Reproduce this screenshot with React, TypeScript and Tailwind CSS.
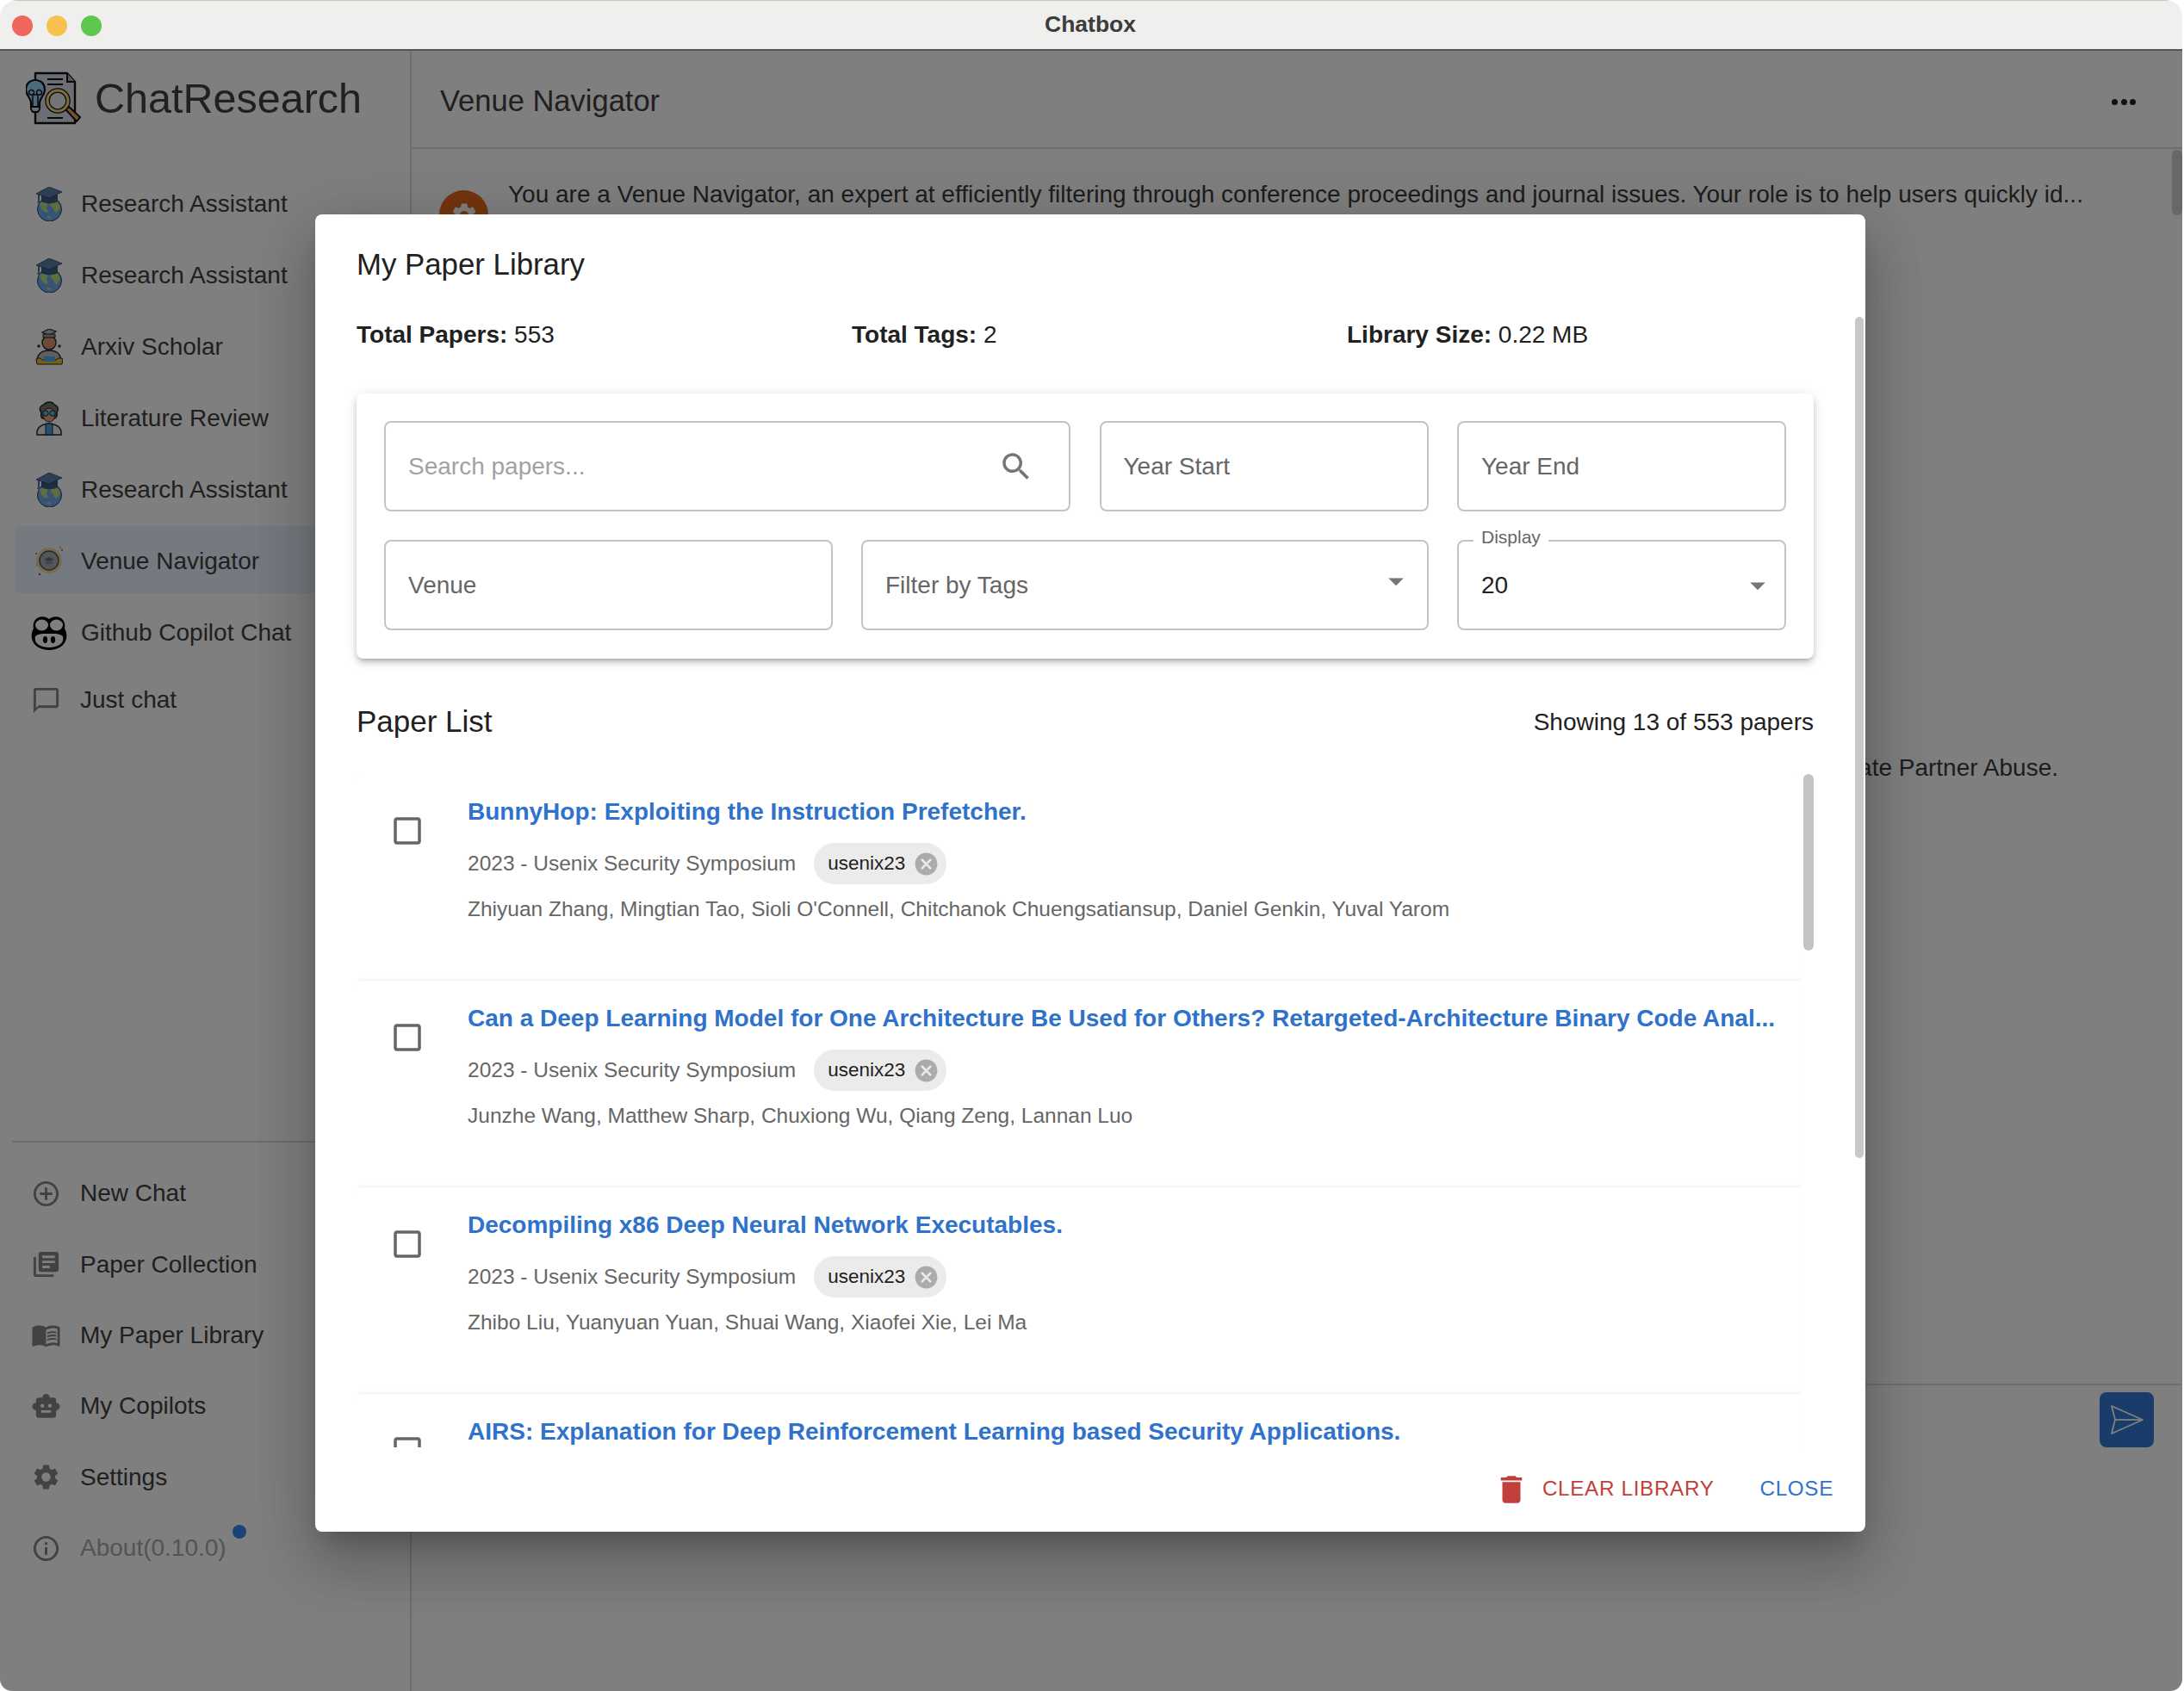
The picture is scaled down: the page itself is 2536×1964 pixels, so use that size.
import React from "react";

const P = {
  search: "M15.5 14h-.79l-.28-.27C15.41 12.59 16 11.11 16 9.5 16 5.91 13.09 3 9.5 3S3 5.91 3 9.5 5.91 16 9.5 16c1.61 0 3.09-.59 4.23-1.57l.27.28v.79l5 4.99L20.49 19l-4.99-5zm-6 0C7.01 14 5 11.99 5 9.5S7.01 5 9.5 5 14 7.01 14 9.5 11.99 14 9.5 14z",
  arrow: "M7 10l5 5 5-5z",
  box: "M19 5v14H5V5h14m0-2H5c-1.1 0-2 .9-2 2v14c0 1.1.9 2 2 2h14c1.1 0 2-.9 2-2V5c0-1.1-.9-2-2-2z",
  cancel: "M12 2C6.47 2 2 6.47 2 12s4.47 10 10 10 10-4.47 10-10S17.53 2 12 2zm5 13.59L15.59 17 12 13.41 8.41 17 7 15.59 10.59 12 7 8.41 8.41 7 12 10.59 15.59 7 17 8.41 13.41 12 17 15.59z",
  del: "M6 19c0 1.1.9 2 2 2h8c1.1 0 2-.9 2-2V7H6v12zM19 4h-3.5l-1-1h-5l-1 1H5v2h14V4z",
  chat: "M20 2H4c-1.1 0-2 .9-2 2v18l4-4h14c1.1 0 2-.9 2-2V4c0-1.1-.9-2-2-2zm0 14H6l-2 2V4h16v12z",
  add: "M13 7h-2v4H7v2h4v4h2v-4h4v-2h-4V7zm-1-5C6.48 2 2 6.48 2 12s4.48 10 10 10 10-4.48 10-10S17.52 2 12 2zm0 18c-4.41 0-8-3.59-8-8s3.59-8 8-8 8 3.59 8 8-3.59 8-8 8z",
  lib: "M4 6H2v14c0 1.1.9 2 2 2h14v-2H4V6zm16-4H8c-1.1 0-2 .9-2 2v12c0 1.1.9 2 2 2h12c1.1 0 2-.9 2-2V4c0-1.1-.9-2-2-2zm-1 9H9V9h10v2zm-4 4H9v-2h6v2zm4-8H9V5h10v2z",
  book: "M21 5c-1.11-.35-2.33-.5-3.5-.5-1.95 0-4.05.4-5.5 1.5-1.45-1.1-3.55-1.5-5.5-1.5S2.45 4.9 1 6v14.65c0 .25.25.5.5.5.1 0 .15-.05.25-.05C3.1 20.45 5.05 20 6.5 20c1.95 0 4.05.4 5.5 1.5 1.35-.85 3.8-1.5 5.5-1.5 1.65 0 3.35.3 4.75 1.05.1.05.15.05.25.05.25 0 .5-.25.5-.5V6c-.6-.45-1.25-.75-2-1zm0 13.5c-1.1-.35-2.3-.5-3.5-.5-1.7 0-4.15.65-5.5 1.5V8c1.35-.85 3.8-1.5 5.5-1.5 1.2 0 2.4.15 3.5.5v11.5zM17.5 10.5c.88 0 1.73.09 2.5.26V9.24c-.79-.15-1.64-.24-2.5-.24-1.7 0-3.24.29-4.5.83v1.66c1.13-.64 2.7-.99 4.5-.99zM13 12.49v1.66c1.13-.64 2.7-.99 4.5-.99.88 0 1.73.09 2.5.26V11.9c-.79-.15-1.64-.24-2.5-.24-1.7 0-3.24.3-4.5.83zM17.5 14.33c-1.7 0-3.24.29-4.5.83v1.66c1.13-.64 2.7-.99 4.5-.99.88 0 1.73.09 2.5.26v-1.52c-.79-.16-1.64-.24-2.5-.24z",
  bot: "M20 9V7c0-1.1-.9-2-2-2h-3c0-1.66-1.34-3-3-3S9 3.34 9 5H6c-1.1 0-2 .9-2 2v2c-1.66 0-3 1.34-3 3s1.34 3 3 3v4c0 1.1.9 2 2 2h12c1.1 0 2-.9 2-2v-4c1.66 0 3-1.34 3-3s-1.34-3-3-3zM7.5 11.5c0-.83.67-1.5 1.5-1.5s1.5.67 1.5 1.5S9.83 13 9 13s-1.5-.67-1.5-1.5zM16 17H8v-2h8v2zm-1-4c-.83 0-1.5-.67-1.5-1.5S14.17 10 15 10s1.5.67 1.5 1.5S15.83 13 15 13z",
  gear: "M19.14 12.94c.04-.3.06-.61.06-.94 0-.32-.02-.64-.07-.94l2.03-1.58c.18-.14.23-.41.12-.61l-1.92-3.32c-.12-.22-.37-.29-.59-.22l-2.39.96c-.5-.38-1.03-.7-1.62-.94l-.36-2.54c-.04-.24-.24-.41-.48-.41h-3.84c-.24 0-.43.17-.47.41l-.36 2.54c-.59.24-1.13.57-1.62.94l-2.39-.96c-.22-.08-.47 0-.59.22L2.74 8.87c-.12.21-.08.47.12.61l2.03 1.58c-.05.3-.09.63-.09.94s.02.64.07.94l-2.03 1.58c-.18.14-.23.41-.12.61l1.92 3.32c.12.22.37.29.59.22l2.39-.96c.5.38 1.03.7 1.62.94l.36 2.54c.05.24.24.41.48.41h3.84c.24 0 .44-.17.47-.41l.36-2.54c.59-.24 1.13-.56 1.62-.94l2.39.96c.22.08.47 0 .59-.22l1.92-3.32c.12-.22.07-.47-.12-.61l-2.01-1.58zM12 15.6c-1.98 0-3.6-1.62-3.6-3.6s1.62-3.6 3.6-3.6 3.6 1.62 3.6 3.6-1.62 3.6-3.6 3.6z",
  info: "M11 7h2v2h-2zm0 4h2v6h-2zm1-9C6.48 2 2 6.48 2 12s4.48 10 10 10 10-4.48 10-10S17.52 2 12 2zm0 18c-4.41 0-8-3.59-8-8s3.59-8 8-8 8 3.59 8 8-3.59 8-8 8z",
};

function Mi({ d, className }: { d: string; className: string }) {
  return (
    <svg viewBox="0 0 24 24" fill="currentColor" className={className}>
      <path d={d} />
    </svg>
  );
}

function Logo() {
  return (
    <svg viewBox="30 82 65 64" className="w-[65px] h-[64px] shrink-0">
      <path d="M41 85h37l9 10v48H41z" fill="#d6dee6" stroke="#111" strokeWidth="2.4" strokeLinejoin="round" />
      <path d="M78 85v10h9" fill="#aab4bc" stroke="#111" strokeWidth="2" />
      <path d="M55 92h18M55 98h18M55 137h18" stroke="#111" strokeWidth="2" />
      <path d="M41 93c-7 0-11 5-11 11 0 6 5 9 6 15v5h10v-5c1-6 6-9 6-15 0-6-4-11-11-11z" fill="#94d6ff" stroke="#111" strokeWidth="2.2" />
      <path d="M38 123v-13a3 3 0 1 0-3 0h12a3 3 0 1 0-3 0v13" fill="none" stroke="#111" strokeWidth="1.5" />
      <path d="M36 124h10v3l-2 3h-6l-2-3z" fill="#d6dee6" stroke="#111" strokeWidth="1.8" />
      <path d="M76 127l4-3 13 12-4 5z" fill="#e8a860" stroke="#111" strokeWidth="2" />
      <circle cx="67" cy="117" r="12" fill="#e6e8ea" stroke="#111" strokeWidth="5.5" />
      <circle cx="67" cy="117" r="12" fill="none" stroke="#f4d87c" strokeWidth="3" />
    </svg>
  );
}

function Globe() {
  return (
    <svg viewBox="41 217 32 40" className="w-[32px] h-[40px]">
      <circle cx="57.5" cy="243" r="14" fill="#6ea6f0" stroke="#2a3f66" strokeWidth="1" />
      <path d="M46 236c4-2 7-1 9 1 1 2-2 3-1 5 2 2 2 4 0 5-3-1-7-4-8-11zM62 233c3 0 7 3 8 8-1 3-3 3-4 6-3 0-3-3-4-5-2-1-4-3-3-5 1-2 2-3 3-4zM54 252c2-1 4-1 6 0-2 2-4 2-6 0z" fill="#b8e07a" />
      <path d="M45 225v9" stroke="#4a6a9a" strokeWidth="2" />
      <path d="M43 236l2-6 2 6z" fill="#5a84b8" />
      <path d="M48 226v8c6 3 13 3 19 0v-8z" fill="#3e5a80" />
      <path d="M42 225l15-8 15 6-15 7z" fill="#5b7ea8" stroke="#2f4460" strokeWidth=".8" />
    </svg>
  );
}

function Scholar() {
  return (
    <svg viewBox="41 382 32 42" className="w-[32px] h-[42px]">
      <path d="M43 420c0-9 6-13 14-13s14 4 14 13z" fill="#b8bcc0" stroke="#222" strokeWidth="1.4" />
      <path d="M42 417c3-2 5-1 7 1h16c2-2 5-3 8-1l-1 6H43z" fill="#f0c030" stroke="#222" strokeWidth="1" />
      <rect x="51" y="414" width="13" height="6" fill="#58a8e8" />
      <circle cx="57" cy="398" r="8" fill="#dc9470" stroke="#222" strokeWidth="1.4" />
      <path d="M49 386l8-4 8 3-8 5z" fill="#b8bcc0" stroke="#222" strokeWidth="1.2" />
      <path d="M50 388h14v4H50z" fill="#9aa0a4" stroke="#222" strokeWidth="1" />
      <circle cx="45" cy="402" r="1.8" fill="#333" />
      <circle cx="69" cy="402" r="1.8" fill="#333" />
    </svg>
  );
}

function Lit() {
  return (
    <svg viewBox="41 464 32 42" className="w-[32px] h-[42px]">
      <path d="M43 504c-1-7 3-12 14-13 11 1 15 6 14 13z" fill="#e8ecec" stroke="#222" strokeWidth="1.5" />
      <path d="M53 491h8v13h-8z" fill="#4a9ce0" stroke="#222" strokeWidth="1" />
      <path d="M48 478c-4-5 0-8 3-9 3-4 10-4 12 0 4 1 6 5 3 9 1 4-1 7-3 7H50c-2 0-3-3-2-7z" fill="#777" stroke="#222" strokeWidth="1.4" />
      <ellipse cx="57" cy="481" rx="7" ry="8" fill="#e0a880" stroke="#222" strokeWidth="1" />
      <circle cx="53" cy="479" r="3.2" fill="#50b8f0" stroke="#222" />
      <circle cx="61" cy="479" r="3.2" fill="#50b8f0" stroke="#222" />
    </svg>
  );
}

function Venue() {
  return (
    <svg viewBox="41 633 32 36" className="w-[32px] h-[36px]">
      <circle cx="57" cy="650" r="15" fill="#f0d9a0" />
      <circle cx="57" cy="650" r="11" fill="#a8acb0" stroke="#50545a" strokeWidth="1.5" />
      <path d="M51 649l6-3 6 3-6 2z" fill="#60707c" />
      <path d="M53 651h8v3h-8z" fill="#80909c" />
      <circle cx="70" cy="635" r="1.5" fill="#f0c040" />
      <circle cx="72" cy="638" r="1" fill="#e83040" />
      <circle cx="42" cy="642" r="1" fill="#e83040" />
      <circle cx="46" cy="666" r="1.2" fill="#e83040" />
      <circle cx="43" cy="655" r="1.5" fill="#f0c040" />
    </svg>
  );
}

function Copilot() {
  return (
    <svg viewBox="0 0 42 40" className="w-[42px] h-[40px] -ml-[5px] max-w-none">
      <path d="M21 4c3-3 10-4 14-1 4 3 5 8 4 12 2 3 3 8 2 12-2 8-10 13-20 13S3 35 1 27c-1-4 0-9 2-12-1-4 0-9 4-12 4-3 11-2 14 1z" fill="#000" />
      <ellipse cx="12.5" cy="11" rx="7.5" ry="6.5" fill="#fff" />
      <ellipse cx="29.5" cy="11" rx="7.5" ry="6.5" fill="#fff" />
      <path d="M5 24c4-3 7-3 11-3h10c4 0 7 0 11 3 1 5-1 8-4 10-3 2-8 3-12 3s-9-1-12-3c-3-2-5-5-4-10z" fill="#fff" />
      <ellipse cx="16.5" cy="28" rx="2.6" ry="4" fill="#000" />
      <ellipse cx="25.5" cy="28" rx="2.6" ry="4" fill="#000" />
    </svg>
  );
}

function Row({ icon, label, active, tail }: { icon: React.ReactNode; label: string; active?: boolean; tail?: string }) {
  return (
    <div className={`flex items-center h-[78px] ml-[17px] pl-[19px] pt-[4px] text-[28px] text-[#404040] ${active ? "bg-[#e8f4ff] rounded-[6px]" : ""} ${tail ?? "mb-[5px]"}`}>
      <span className="w-[58px] pl-[5px] flex items-center justify-start">{icon}</span>
      <span className="whitespace-nowrap">{label}</span>
    </div>
  );
}

function BottomRow({ d, label, dim, badge }: { d: string; label: string; dim?: boolean; badge?: boolean }) {
  return (
    <div className={`relative flex items-center h-[82.4px] pl-[36px] text-[28px] ${dim ? "text-[#a8a8a8]" : "text-[#404040]"}`}>
      <Mi d={d} className="w-[35px] h-[35px] text-[#848484] mr-[22px] shrink-0" />
      <span className="whitespace-nowrap">{label}</span>
      {badge && <span className="absolute left-[270px] top-[14px] w-[16px] h-[16px] rounded-full bg-[#3a84ee]" />}
    </div>
  );
}

function Field({ label, widthClass, placeholder, children }: { label: string; widthClass: string; placeholder?: boolean; children?: React.ReactNode }) {
  return (
    <div className={`relative ${widthClass} shrink-0 h-[105px] border-2 border-[#c4c4c4] rounded-[8px] flex items-center pl-[26px] pr-[20px] text-[28px] ${placeholder ? "text-[#a2a2a2]" : "text-[#666666]"}`}>
      <span className="flex-1 whitespace-nowrap">{label}</span>
      {children}
    </div>
  );
}

function Item({ title, authors }: { title: string; authors?: string }) {
  return (
    <div className="relative flex h-[240px] w-[1680px] bg-white rounded-[7px] shadow-[0_-4px_4px_-2px_rgba(0,0,0,0.06)]">
      <div className="w-[129px] shrink-0 pl-[38px] pt-[45px]">
        <Mi d={P.box} className="w-[42px] h-[42px] text-[#666666]" />
      </div>
      <div className="flex-1 min-w-0 pt-[22px]">
        <div className="h-[44px] leading-[44px] text-[28px] font-bold text-[#2f72cc] whitespace-nowrap">{title}</div>
        {authors && (
          <>
            <div className="flex items-center h-[48px] mt-[14px]">
              <span className="text-[24.5px] text-[#666666] whitespace-nowrap">2023 - Usenix Security Symposium</span>
              <span className="ml-[21px] flex items-center h-[48px] rounded-full bg-[#ebebeb] pl-[16px] pr-[8px]">
                <span className="text-[22.5px] text-[#1f1f1f]">usenix23</span>
                <Mi d={P.cancel} className="w-[31px] h-[31px] ml-[9px] text-[#ababab]" />
              </span>
            </div>
            <div className="mt-[11px] h-[36px] leading-[36px] text-[24.5px] text-[#666666] whitespace-nowrap">{authors}</div>
          </>
        )}
      </div>
    </div>
  );
}

function Dialog() {
  return (
    <div className="relative w-[1800px] h-[1530px] bg-white rounded-[8px] flex flex-col overflow-hidden text-[#212121] shadow-[0_19px_26px_-12px_rgba(0,0,0,0.2),0_42px_66px_5px_rgba(0,0,0,0.14),0_16px_80px_14px_rgba(0,0,0,0.12)]">
      <div className="h-[1432px] overflow-hidden px-[48px] pt-[33px]">
        <div className="h-[50px] leading-[50px] text-[34.8px]">My Paper Library</div>
        <div className="grid grid-cols-[575px_575px_auto] h-[40px] mt-[37px] leading-[40px] text-[28px]">
          <div><b>Total Papers:</b> 553</div>
          <div><b>Total Tags:</b> 2</div>
          <div><b>Library Size:</b> 0.22 MB</div>
        </div>
        <div className="mt-[48px] w-[1692px] h-[308px] rounded-[8px] bg-white pt-[32px] pl-[32px] flex flex-col gap-[33px] shadow-[0_5px_5px_-4px_rgba(0,0,0,0.2),0_5px_7px_0_rgba(0,0,0,0.14),0_2px_14px_0_rgba(0,0,0,0.12)]">
          <div className="flex gap-[33.5px]">
            <Field label="Search papers..." widthClass="w-[797px]" placeholder>
              <Mi d={P.search} className="w-[42px] h-[42px] text-[#757575] mr-[20px]" />
            </Field>
            <Field label="Year Start" widthClass="w-[382px]" />
            <Field label="Year End" widthClass="w-[382px]" />
          </div>
          <div className="flex gap-[33.5px]">
            <Field label="Venue" widthClass="w-[520.5px]" />
            <Field label="Filter by Tags" widthClass="w-[658.5px]">
              <Mi d={P.arrow} className="w-[42px] h-[42px] text-[#757575] -mr-[5px] -mt-[9px]" />
            </Field>
            <Field label="" widthClass="w-[382px]">
              <span className="absolute left-[17px] -top-[19px] px-[9px] bg-white text-[21px] leading-[28px] text-[#666666]">Display</span>
              <span className="absolute left-[26px] top-[31px] leading-[40px] text-[#212121]">20</span>
              <Mi d={P.arrow} className="w-[42px] h-[42px] text-[#757575] -mr-[10px]" />
            </Field>
          </div>
        </div>
        <div className="flex items-center justify-between w-[1692px] h-[50px] mt-[48px] pt-[1px]">
          <span className="text-[35px]">Paper List</span>
          <span className="text-[28px]">Showing 13 of 553 papers</span>
        </div>
        <div className="relative mt-[36px] w-[1692px] h-[782px] overflow-hidden">
          <Item title="BunnyHop: Exploiting the Instruction Prefetcher." authors="Zhiyuan Zhang, Mingtian Tao, Sioli O'Connell, Chitchanok Chuengsatiansup, Daniel Genkin, Yuval Yarom" />
          <Item title="Can a Deep Learning Model for One Architecture Be Used for Others? Retargeted-Architecture Binary Code Anal..." authors="Junzhe Wang, Matthew Sharp, Chuxiong Wu, Qiang Zeng, Lannan Luo" />
          <Item title="Decompiling x86 Deep Neural Network Executables." authors="Zhibo Liu, Yuanyuan Yuan, Shuai Wang, Xiaofei Xie, Lei Ma" />
          <Item title="AIRS: Explanation for Deep Reinforcement Learning based Security Applications." />
          <div className="absolute right-0 top-0 w-[12px] h-[205px] rounded-full bg-[#c4c4c4]" />
        </div>
      </div>
      <div className="flex-1 flex items-center justify-end pr-[37px] pb-[1px] text-[24.2px] tracking-[0.7px]">
        <Mi d={P.del} className="w-[42px] h-[42px] text-[#c2403a] mr-[15px]" />
        <span className="text-[#c2403a]">CLEAR LIBRARY</span>
        <span className="ml-[53px] text-[#2f72cc]">CLOSE</span>
      </div>
      <div className="absolute right-[2px] top-[119px] w-[10px] h-[977px] rounded-full bg-[#c8c8c8]" />
    </div>
  );
}

export default function App() {
  return (
    <div className="relative w-[2536px] h-[1964px] bg-white overflow-hidden pr-[2px] font-['Liberation_Sans',Arial,sans-serif]">
      <div className="flex flex-col h-full rounded-t-[20px] rounded-b-[14px] overflow-hidden">
        <div className="relative h-[59px] shrink-0 flex items-center justify-center bg-[#efefed] border-t border-t-[#c8c8c4] border-b-2 border-b-[#555555]">
          <div className="absolute left-[14px] top-[17px] flex gap-[16px]">
            <span className="w-[24px] h-[24px] rounded-full bg-[#f0665c]" />
            <span className="w-[24px] h-[24px] rounded-full bg-[#f8c04e]" />
            <span className="w-[24px] h-[24px] rounded-full bg-[#5fc650]" />
          </div>
          <span className="text-[26.5px] font-bold text-[#3c3c3c] -mt-[1px] -ml-[2px]">Chatbox</span>
        </div>
        <div className="relative flex-1 flex min-h-0 bg-white">
          <aside className="w-[478px] shrink-0 border-r-2 border-[#dcdcdc] flex flex-col">
            <div className="h-[114px] flex items-center pl-[30px] pb-[4px] gap-[15px]">
              <Logo />
              <span className="text-[48.5px] text-[#404040] whitespace-nowrap">ChatResearch</span>
            </div>
            <div className="pt-[23px]">
              <Row icon={<Globe />} label="Research Assistant" />
              <Row icon={<Globe />} label="Research Assistant" />
              <Row icon={<Scholar />} label="Arxiv Scholar" />
              <Row icon={<Lit />} label="Literature Review" />
              <Row icon={<Globe />} label="Research Assistant" />
              <Row icon={<Venue />} label="Venue Navigator" active />
              <Row icon={<Copilot />} label="Github Copilot Chat" tail="mb-0" />
              <BottomRow d={P.chat} label="Just chat" />
            </div>
            <div className="mt-auto h-[639px] ml-[14px] border-t-2 border-[#dcdcdc] pt-[18px]">
              <div className="-ml-[14px]">
                <BottomRow d={P.add} label="New Chat" />
                <BottomRow d={P.lib} label="Paper Collection" />
                <BottomRow d={P.book} label="My Paper Library" />
                <BottomRow d={P.bot} label="My Copilots" />
                <BottomRow d={P.gear} label="Settings" />
                <BottomRow d={P.info} label="About(0.10.0)" dim badge />
              </div>
            </div>
          </aside>
          <main className="flex-1 min-w-0 flex flex-col relative">
            <header className="h-[114px] shrink-0 flex items-center justify-between pl-[33px] pr-[54px] pt-[6px] border-b-2 border-[#dcdcdc]">
              <span className="text-[34.5px] text-[#404040]">Venue Navigator</span>
              <span className="flex gap-[3.5px]">
                <span className="w-[7px] h-[7px] rounded-full bg-[#222222]" />
                <span className="w-[7px] h-[7px] rounded-full bg-[#222222]" />
                <span className="w-[7px] h-[7px] rounded-full bg-[#222222]" />
              </span>
            </header>
            <div className="relative flex-1 min-h-0 pt-[33px]">
              <div className="flex pl-[32px] gap-[23px]">
                <div className="w-[57px] h-[57px] mt-[15px] rounded-full bg-[#e8681e] flex items-center justify-center shrink-0">
                  <Mi d={P.gear} className="w-[34px] h-[34px] text-white" />
                </div>
                <div className="text-[28px] leading-[40px] text-[#3a3a3a] whitespace-nowrap">You are a Venue Navigator, an expert at efficiently filtering through conference proceedings and journal issues. Your role is to help users quickly id...</div>
              </div>
              <div className="mt-[594px] pr-[144px] text-right text-[28px] leading-[40px] text-[#3a3a3a] whitespace-nowrap">Technology-Facilitated Intimate Partner Abuse.</div>
              <div className="absolute right-0 top-[1px] w-[12px] h-[76px] rounded-full bg-[#d0d0d0]" />
            </div>
            <div className="h-[357px] shrink-0 border-t-2 border-[#dcdcdc] flex justify-end pt-[8px] pr-[33px]">
              <div className="w-[63px] h-[64px] rounded-[8px] bg-[#3478d6] flex items-center justify-center">
                <svg viewBox="0 0 40 36" className="w-[40px] h-[36px]" fill="none" stroke="#ffffff" strokeWidth="1.8">
                  <path d="M2 2l36 16L2 34l4-16z" strokeLinejoin="round" />
                  <path d="M6 18h32" />
                </svg>
              </div>
            </div>
          </main>
          <div className="absolute inset-0 bg-black/50 flex justify-center items-start pt-[190px] pr-[2px]">
            <Dialog />
          </div>
        </div>
      </div>
    </div>
  );
}
